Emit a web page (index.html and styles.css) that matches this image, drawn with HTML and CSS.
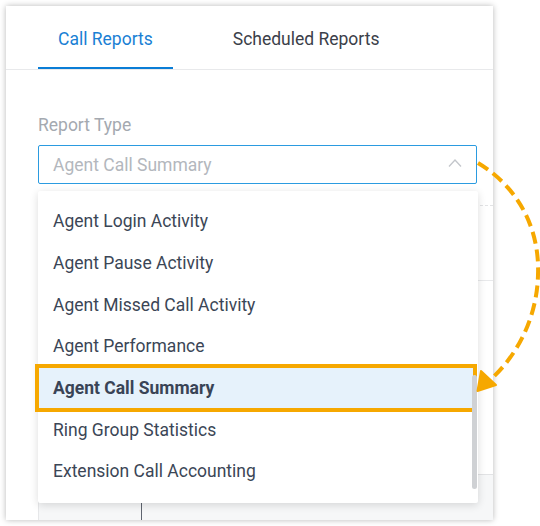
FILE: index.html
```html
<!DOCTYPE html>
<html lang="en">
<head>
<meta charset="utf-8">
<title>Call Reports</title>
<link rel="stylesheet" href="styles.css">
</head>
<body>
<div class="card">
  <div class="tabs">
    <div class="tab active">Call Reports</div>
    <div class="tab">Scheduled Reports</div>
  </div>
  <div class="form">
    <div class="label">Report Type</div>
    <div class="select">
      <span class="placeholder">Agent Call Summary</span>
      <svg class="chevron" width="14" height="8" viewBox="0 0 14 8"><path d="M1 7.5 L7 1 L13 7.5" fill="none" stroke="#c3c6cb" stroke-width="1.3"/></svg>
    </div>
    <div class="filters"></div>
    <div class="table">
      <div class="trow tall"></div>
      <div class="trow last"><div class="tcell"></div></div>
    </div>
  </div>
  <div class="dropdown">
    <div class="item">Agent Login Activity</div>
    <div class="item">Agent Pause Activity</div>
    <div class="item">Agent Missed Call Activity</div>
    <div class="item">Agent Performance</div>
    <div class="item selected">Agent Call Summary</div>
    <div class="item">Ring Group Statistics</div>
    <div class="item">Extension Call Accounting</div>
    <div class="thumb"></div>
  </div>
</div>
<svg class="annot" width="540" height="526" viewBox="0 0 540 526">
  <path d="M478 163 C515 185 540 225 538 275 C537 320 515 358 490 380" fill="none" stroke="#f6a800" stroke-width="4" stroke-dasharray="12 6"/>
  <path d="M481 371 L477.5 391 L496 385 Z" fill="#f6a800" stroke="#f6a800" stroke-width="2" stroke-linejoin="round"/>
</svg>
</body>
</html>
```
FILE: styles.css
```css
* { box-sizing: border-box; }
html, body { margin: 0; padding: 0; background: #fff; }
body {
  width: 540px;
  height: 526px;
  overflow: hidden;
  position: relative;
  font-family: Roboto, "Liberation Sans", Arial, sans-serif;
}
.card {
  position: relative;
  margin: 6px 0 0 6px;
  width: 487px;
  height: 514px;
  background: #fff;
  box-shadow: 0 0 6px rgba(0, 0, 0, 0.28);
  overflow: hidden;
}
.tabs {
  display: flex;
  padding-left: 32px;
  border-bottom: 1px solid #e8e9eb;
}
.tab {
  height: 63px;
  padding: 21px 20px 0;
  font-size: 17.5px;
  line-height: 24px;
  color: #3b4049;
}
.tab + .tab { margin-left: 40px; }
.tab.active {
  color: #1a7fd4;
  border-bottom: 2px solid #0a7dd6;
  margin-bottom: -1px;
}
.form {
  padding: 0 16px 0 32px;
}
.label {
  margin-top: 43px;
  font-size: 17.5px;
  line-height: 24px;
  color: #a4a9b0;
}
.select {
  margin-top: 8px;
  height: 39px;
  border: 1px solid #2b9be0;
  border-radius: 2px;
  display: flex;
  align-items: center;
  justify-content: space-between;
  padding: 0 14px 0 14px;
}
.placeholder {
  font-size: 17.5px;
  color: #b3b7bd;
}
.chevron { display: block; margin-bottom: 3px; }
.filters {
  margin-top: 21px;
  margin-right: -16px;
  height: 76px;
  border-top: 1px dashed #e2e3e5;
  border-bottom: 1px solid #e8e9eb;
}
.table {
  margin-right: -16px;
  border-left: 1px solid #e6e7e9;
}
.trow.tall {
  height: 194px;
  border-bottom: 1px solid #e2e3e5;
}
.trow.last {
  height: 60px;
  background: #f6f7f8;
}
.tcell {
  width: 103px;
  height: 100%;
  border-right: 1px solid #5f6570;
}
.dropdown {
  position: absolute;
  top: 185px;
  left: 32px;
  width: 440px;
  height: 312px;
  padding-top: 9.5px;
  background: #fff;
  border-radius: 2px;
  box-shadow: 0 2px 8px rgba(0, 0, 0, 0.14);
}
.item {
  height: 41.67px;
  margin-right: 4px;
  padding-left: 15px;
  display: flex;
  align-items: center;
  font-size: 17.5px;
  color: #3b4656;
}
.item.selected {
  background: #e6f2fb;
  font-weight: 700;
  color: #394456;
  outline: 4px solid #f6a800;
  outline-offset: -1.5px;
  position: relative;
}
.thumb {
  position: absolute;
  left: 434px;
  top: 184px;
  width: 5px;
  height: 114px;
  border-radius: 3px;
  background: #cfd1d4;
}
.annot {
  position: absolute;
  top: 0;
  left: 0;
  pointer-events: none;
}
```
